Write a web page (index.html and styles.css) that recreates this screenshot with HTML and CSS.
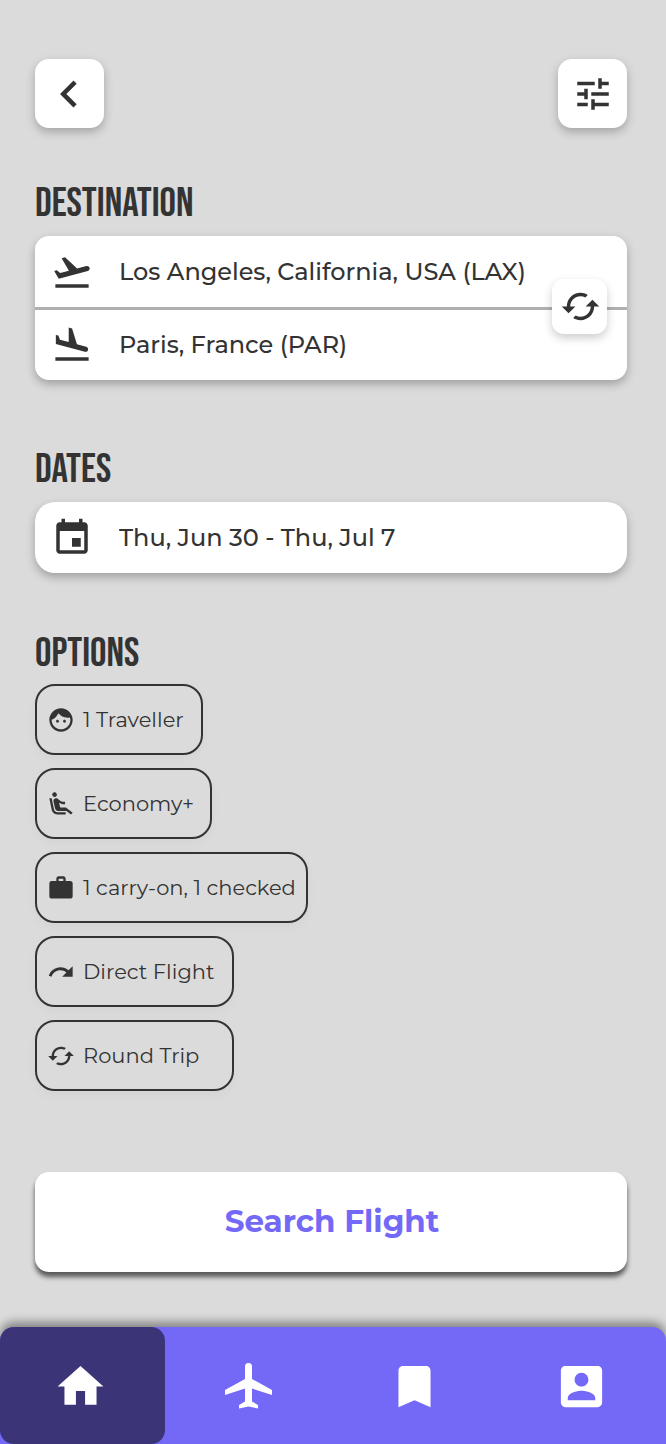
FILE: index.html
```html
<!DOCTYPE html>
<html lang="en">
<head>
<meta charset="utf-8">
<meta name="viewport" content="width=device-width, initial-scale=1">
<title>Flight search</title>
<link rel="stylesheet" href="styles.css">
</head>
<body>
<div class="app">
  <header class="topbar">
    <button class="tile tile-back" type="button" aria-label="Back">
      <svg class="icon icon-back" viewBox="0 0 24 24"><path d="M15.41 7.41L14 6l-6 6 6 6 1.41-1.41L10.83 12z"/></svg>
    </button>
    <button class="tile" type="button" aria-label="Filters">
      <svg class="icon icon-field" viewBox="0 0 24 24"><path d="M3 17v2h6v-2H3zM3 5v2h10V5H3zm10 16v-2h8v-2h-8v-2h-2v6h2zM7 9v2H3v2h4v2h2V9H7zm14 4v-2H11v2h10zm-6-4h2V7h4V5h-4V3h-2v6z"/></svg>
    </button>
  </header>

  <main class="content">
    <section class="group group-destination">
      <h2 class="heading">DESTINATION</h2>
      <div class="card route">
        <label class="field">
          <svg class="icon icon-field" viewBox="0 0 24 24" role="img" aria-label="From"><path d="M2.5 19h19v2h-19zm19.57-9.36c-.21-.8-1.04-1.28-1.84-1.06L14.92 10l-6.9-6.43-1.93.51 4.14 7.17-4.97 1.33-1.97-1.54-1.45.39 1.82 3.16.77 1.33 1.6-.43 5.31-1.42 4.35-1.16L21 11.49c.81-.23 1.28-1.05 1.07-1.85z"/></svg>
          <input class="value" type="text" value="Los Angeles, California, USA (LAX)">
        </label>
        <label class="field">
          <svg class="icon icon-field" viewBox="0 0 24 24" role="img" aria-label="To"><path d="M2.5 19h19v2h-19zm7.18-5.73l4.35 1.16 5.31 1.42c.8.21 1.62-.26 1.84-1.06.21-.8-.26-1.62-1.06-1.84l-5.31-1.42-2.76-9.02L10.12 2v8.28L5.15 8.95l-.93-2.32-1.45-.39v5.17l1.6.43 5.31 1.43z"/></svg>
          <input class="value" type="text" value="Paris, France (PAR)">
        </label>
        <button class="swap" type="button" aria-label="Swap origin and destination">
          <svg class="icon icon-swap" viewBox="0 0 24 24"><path d="M19 8l-4 4h3c0 3.31-2.69 6-6 6-1.01 0-1.97-.25-2.8-.7l-1.46 1.46C8.97 19.54 10.43 20 12 20c4.42 0 8-3.58 8-8h3l-4-4zM6 12c0-3.31 2.69-6 6-6 1.01 0 1.97.25 2.8.7l1.46-1.46C15.03 4.46 13.57 4 12 4c-4.42 0-8 3.58-8 8H1l4 4 4-4H6z"/></svg>
        </button>
      </div>
    </section>

    <section class="group group-dates">
      <h2 class="heading">DATES</h2>
      <label class="card card-round field">
        <svg class="icon icon-field" viewBox="0 0 24 24" role="img" aria-label="Dates"><path d="M17 12h-5v5h5v-5zM16 1v2H8V1H6v2H5c-1.11 0-1.99.9-1.99 2L3 19c0 1.1.89 2 2 2h14c1.1 0 2-.9 2-2V5c0-1.1-.9-2-2-2h-1V1h-2zm3 18H5V8h14v11z"/></svg>
        <input class="value" type="text" value="Thu, Jun 30 - Thu, Jul 7">
      </label>
    </section>

    <section class="group group-options">
      <h2 class="heading">OPTIONS</h2>
      <div class="chips">
        <button class="chip chip-travellers" type="button">
          <svg class="icon icon-chip" viewBox="0 0 24 24"><path d="M10.25 13c0 .69-.56 1.25-1.25 1.25S7.75 13.69 7.75 13s.56-1.25 1.25-1.25 1.25.56 1.25 1.25zM15 11.75c-.69 0-1.25.56-1.25 1.25s.56 1.25 1.25 1.25 1.25-.56 1.25-1.25-.56-1.25-1.25-1.25zm7 .25c0 5.52-4.48 10-10 10S2 17.52 2 12 6.48 2 12 2s10 4.48 10 10zm-2 0c0-.78-.12-1.53-.33-2.24-.7.15-1.42.24-2.17.24-3.13 0-5.92-1.44-7.76-3.69C8.69 8.87 6.6 10.88 4 11.86c.01.04 0 .09 0 .14 0 4.41 3.59 8 8 8s8-3.59 8-8z"/></svg>
          <span>1 Traveller</span>
        </button>
        <button class="chip chip-class" type="button">
          <svg class="icon icon-chip" viewBox="0 0 24 24"><path d="M5.35 5.64c-.9-.64-1.12-1.88-.49-2.79.63-.9 1.88-1.12 2.79-.49.9.64 1.12 1.88.49 2.79-.64.9-1.88 1.12-2.79.49zM16 19H8.93c-1.48 0-2.74-1.08-2.96-2.54L4 7H2l1.99 9.76C4.37 19.2 6.47 21 8.94 21H16v-2zm.23-4h-4.88l-1.03-4.1c1.58.89 3.28 1.54 5.15 1.22V9.99c-1.63.31-3.44-.27-4.69-1.25L9.14 7.47c-.23-.18-.49-.3-.76-.38-.32-.09-.66-.12-.99-.06h-.02c-1.23.22-2.05 1.39-1.84 2.61l1.35 5.92C7.16 16.98 8.39 18 9.83 18h6.85l3.82 3 1.5-1.5-5.77-4.5z"/></svg>
          <span>Economy+</span>
        </button>
        <button class="chip chip-bags" type="button">
          <svg class="icon icon-chip" viewBox="0 0 24 24"><path d="M20 6h-4V4c0-1.11-.89-2-2-2h-4c-1.11 0-2 .89-2 2v2H4c-1.11 0-1.99.89-1.99 2L2 19c0 1.11.89 2 2 2h16c1.11 0 2-.89 2-2V8c0-1.11-.89-2-2-2zm-6 0h-4V4h4v2z"/></svg>
          <span>1 carry-on, 1 checked</span>
        </button>
        <button class="chip chip-trip" type="button">
          <svg class="icon icon-chip" viewBox="0 0 24 24"><path d="M18.4 10.6C16.55 8.99 14.15 8 11.5 8c-4.65 0-8.58 3.03-9.96 7.22L3.9 16c1.05-3.19 4.05-5.5 7.6-5.5 1.95 0 3.73.72 5.12 1.88L13 16h9V7l-3.6 3.6z"/></svg>
          <span>Direct Flight</span>
        </button>
        <button class="chip chip-trip" type="button">
          <svg class="icon icon-chip" viewBox="0 0 24 24"><path d="M19 8l-4 4h3c0 3.31-2.69 6-6 6-1.01 0-1.97-.25-2.8-.7l-1.46 1.46C8.97 19.54 10.43 20 12 20c4.42 0 8-3.58 8-8h3l-4-4zM6 12c0-3.31 2.69-6 6-6 1.01 0 1.97.25 2.8.7l1.46-1.46C15.03 4.46 13.57 4 12 4c-4.42 0-8 3.58-8 8H1l4 4 4-4H6z"/></svg>
          <span>Round Trip</span>
        </button>
      </div>
    </section>

    <button class="search" type="submit">Search Flight</button>
  </main>

  <nav class="tabs" aria-label="Main">
    <a class="tab tab-active" href="#home" aria-label="Home" aria-current="page">
      <svg class="icon icon-tab" viewBox="0 0 24 24"><path d="M10 20v-6h4v6h5v-8h3L12 3 2 12h3v8z"/></svg>
    </a>
    <a class="tab" href="#flights" aria-label="Flights">
      <svg class="icon icon-plane" viewBox="0 0 47 46"><path d="M20 3.5a3.5 3.5 0 0 1 7 0V16l20 11v5l-20-6.5V38.5l6 3.5v3.5l-9.5-2-9.5 2V42l6-3.5V25.5L0 32v-5l20-11z"/></svg>
    </a>
    <a class="tab" href="#saved" aria-label="Saved">
      <svg class="icon icon-tab" viewBox="0 0 24 24"><path d="M17 3H7c-1.1 0-1.99.9-1.99 2L5 21l7-3 7 3V5c0-1.1-.9-2-2-2z"/></svg>
    </a>
    <a class="tab" href="#account" aria-label="Account">
      <svg class="icon icon-tab" viewBox="0 0 24 24"><path d="M3 5v14c0 1.1.89 2 2 2h14c1.1 0 2-.9 2-2V5c0-1.1-.9-2-2-2H5c-1.11 0-2 .9-2 2zm12 4c0 1.66-1.34 3-3 3s-3-1.34-3-3 1.34-3 3-3 3 1.34 3 3zm-9 8c0-2 4-3.1 6-3.1s6 1.1 6 3.1v1H6v-1z"/></svg>
    </a>
  </nav>
</div>
</body>
</html>
```

FILE: styles.css
```css
* {
  box-sizing: border-box;
}

body {
  margin: 0;
  background: #dbdbdb;
  color: #333;
  font-family: Montserrat, Inter, "Open Sans", sans-serif;
}

button,
input {
  margin: 0;
  border: 0;
  padding: 0;
  color: inherit;
  font: inherit;
}

.app {
  display: flex;
  flex-direction: column;
  min-height: 100vh;
}

.topbar {
  display: flex;
  justify-content: space-between;
  padding: 59px 39px 0 35px;
}

.tile {
  display: flex;
  align-items: center;
  justify-content: center;
  width: 69px;
  height: 69px;
  border-radius: 14px;
  background: #fff;
  box-shadow: 0 4px 10px rgba(0, 0, 0, 0.25);
}

.tile-back {
  padding-right: 2px;
}

.icon {
  display: block;
  flex: none;
  fill: currentColor;
}

.icon-back {
  width: 54px;
  height: 54px;
}

.icon-field {
  width: 42px;
  height: 42px;
}

.icon-swap {
  width: 41px;
  height: 41px;
}

.icon-chip {
  width: 28px;
  height: 28px;
}

.icon-tab {
  width: 55px;
  height: 55px;
}

.icon-plane {
  width: 47px;
  height: 46px;
}

.content {
  display: flex;
  flex: 1;
  flex-direction: column;
  padding: 56px 39px 55px 35px;
}

.group-destination {
  margin-bottom: 70px;
}

.group-dates {
  margin-bottom: 61px;
}

.group-options {
  margin-bottom: 81px;
}

.heading {
  margin: 0 0 12px;
  font-family: "Bebas Neue", "Roboto Condensed", "Liberation Sans Narrow", "Liberation Sans", sans-serif;
  font-size: 41px;
  font-weight: 400;
  line-height: 40px;
}

.group-options .heading {
  margin-bottom: 10px;
}

.card {
  border-radius: 14px;
  background: #fff;
  box-shadow: 0 4px 10px rgba(0, 0, 0, 0.28);
}

.card-round {
  border-radius: 20px;
}

.route {
  position: relative;
}

.field {
  display: flex;
  align-items: center;
  gap: 26px;
  height: 71px;
  padding: 0 16px;
}

.route .field + .field {
  height: 73px;
  border-top: 3px solid #b0b0b0;
}

.value {
  flex: 1;
  min-width: 0;
  background: transparent;
  font-size: 24px;
  font-weight: 500;
  line-height: 32px;
  outline-offset: 4px;
}

.swap {
  position: absolute;
  top: 43px;
  right: 20px;
  display: flex;
  align-items: center;
  justify-content: center;
  width: 55px;
  height: 55px;
  padding-left: 2px;
  border-radius: 12px;
  background: #fff;
  box-shadow: 0 4px 10px rgba(0, 0, 0, 0.2);
}

.chips {
  display: flex;
  flex-direction: column;
  align-items: flex-start;
  gap: 13px;
}

.chip {
  display: flex;
  align-items: center;
  gap: 8px;
  height: 71px;
  padding-left: 10px;
  border: 2px solid #333;
  border-radius: 20px;
  background: transparent;
  box-shadow: 0 4px 12px rgba(0, 0, 0, 0.03);
  font-size: 21px;
  font-weight: 450;
  line-height: 28px;
  white-space: nowrap;
}

.chip-travellers {
  min-width: 168px;
}

.chip-class {
  min-width: 177px;
}

.chip-bags {
  min-width: 273px;
}

.chip-trip {
  min-width: 199px;
}

.search {
  height: 100px;
  border-radius: 14px;
  padding: 0 0 2px 2px;
  background: #fff;
  box-shadow: 0 5px 5px rgba(0, 0, 0, 0.6);
  color: #7469f6;
  font-size: 31px;
  font-weight: 700;
}

.tabs {
  display: grid;
  grid-template-columns: repeat(4, 1fr);
  height: 117px;
  border-radius: 14px 14px 0 0;
  background: #7469f6;
  box-shadow: 0 -5px 10px rgba(0, 0, 0, 0.4);
}

.tab {
  display: flex;
  align-items: center;
  justify-content: center;
  padding: 1px 3px 0 0;
  color: #fff;
}

.tab-active {
  margin-right: 2px;
  border-radius: 14px;
  background: #3b3476;
}
```
